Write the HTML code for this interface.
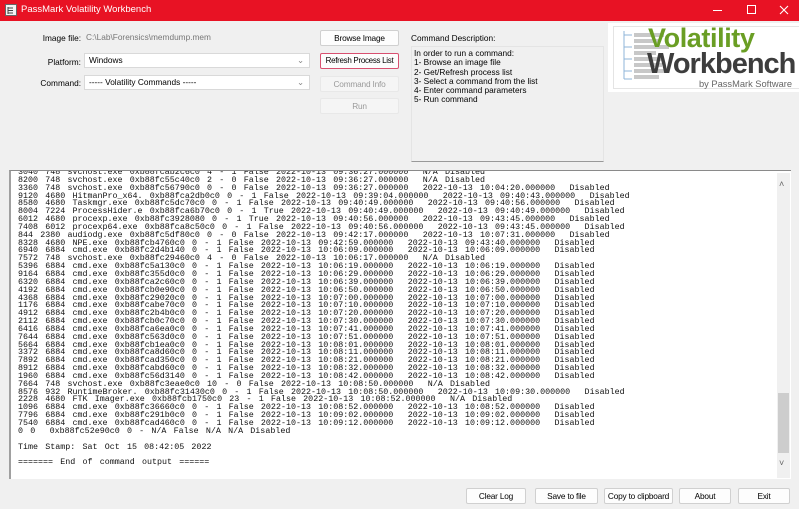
<!DOCTYPE html>
<html><head><meta charset="utf-8"><style>
*{margin:0;padding:0;box-sizing:border-box}
body{width:799px;height:509px;background:#f0f0f0;font-family:"Liberation Sans",sans-serif;font-size:8.3px;color:#000;position:relative;overflow:hidden}
.abs{position:absolute}
.title{left:0;top:0;width:799px;height:21px;background:#e81224;color:#fff}
.lbl{text-align:right;width:80px;left:0}
.combo{background:#fff;border:1px solid #d9d9d9;height:15px;padding-left:4px;line-height:13px}
.btn{background:#fdfdfd;border:1px solid #d0d0d0;border-radius:2px;text-align:center;height:16px;line-height:14px;white-space:nowrap;letter-spacing:-0.2px}
.dis{background:#f5f5f5;border-color:#e8e8e8;color:#9a9a9a}
pre{font-family:"Liberation Mono",monospace;font-size:8.35px;line-height:7.85px;white-space:pre;color:#111;word-spacing:2.2px}
</style></head><body>
<div class="abs title">
 <svg class="abs" style="left:5px;top:4px" width="12" height="12"><rect x=".5" y=".5" width="11" height="11" fill="#f3f3f3" stroke="#666"/><path d="M3 3v7M3 4h5M3 6.5h5M3 9h5" stroke="#444" fill="none"/></svg>
 <div class="abs" style="left:21px;top:4px;font-size:9.5px">PassMark Volatility Workbench</div>
 <div class="abs" style="left:713px;top:10px;width:9px;height:1px;background:#fff"></div>
 <div class="abs" style="left:747px;top:5px;width:9px;height:9px;border:1px solid #fff"></div>
 <svg class="abs" style="left:779px;top:5px" width="10" height="10"><path d="M1 1l8 8M9 1l-8 8" stroke="#fff" stroke-width="1.1"/></svg>
</div>
<div class="abs lbl" style="top:33px;width:81px">Image file:</div>
<div class="abs" style="left:86px;top:32px;color:#777">C:\Lab\Forensics\memdump.mem</div>
<div class="abs lbl" style="top:57px;width:81px">Platform:</div>
<div class="abs combo" style="left:84px;top:53px;width:226px">Windows<span class="abs" style="right:5px;top:0;color:#888">&#8964;</span></div>
<div class="abs lbl" style="top:78px;width:81px">Command:</div>
<div class="abs combo" style="left:84px;top:75px;width:226px">----- Volatility Commands -----<span class="abs" style="right:5px;top:0;color:#888">&#8964;</span></div>
<div class="abs btn" style="left:320px;top:30px;width:79px">Browse Image</div>
<div class="abs btn" style="left:320px;top:53px;width:79px;border-color:#d85070;font-size:8px;letter-spacing:-0.3px">Refresh Process List</div>
<div class="abs btn dis" style="left:320px;top:76px;width:79px">Command Info</div>
<div class="abs btn dis" style="left:320px;top:98px;width:79px">Run</div>
<div class="abs" style="left:411px;top:33px">Command Description:</div>
<div class="abs" style="left:411px;top:46px;width:193px;height:116px;border:1px solid #e4e4e4;border-bottom:1px solid #999;padding:2px 0 0 2px;line-height:9.3px">In order to run a command:<br>1- Browse an image file<br>2- Get/Refresh process list<br>3- Select a command from the list<br>4- Enter command parameters<br>5- Run command</div>
<div class="abs" style="left:608px;top:23px;width:191px;height:69px;background:#fff;overflow:hidden">
 <div class="abs" style="left:5px;top:3px;width:186px;height:63px;border:1px solid #e4e4e4;border-right:none"></div>
 <svg class="abs" style="left:11px;top:6px" width="55" height="58"><path d="M5 2v48M5 6h8M5 18h8M5 30h8M5 42h8M5 50h8" stroke="#8fb4d8" fill="none"/><g fill="#c8c8c8"><rect x="15" y="4" width="30" height="4"/><rect x="15" y="10" width="25" height="4"/><rect x="15" y="16" width="35" height="4"/><rect x="15" y="22" width="22" height="4"/><rect x="15" y="28" width="30" height="4"/><rect x="15" y="34" width="28" height="4"/><rect x="15" y="40" width="33" height="4"/><rect x="15" y="46" width="25" height="4"/></g></svg>
 <div class="abs" style="left:40px;top:0px;font-size:27px;font-weight:bold;color:#6a9e24;letter-spacing:-0.4px">Volatility</div>
 <div class="abs" style="left:39px;top:25px;font-size:29px;font-weight:bold;color:#3d3d3d;letter-spacing:-1px">Workbench</div>
 <div class="abs" style="left:91px;top:56px;font-size:9.3px;color:#666">by PassMark Software</div>
</div>
<div class="abs" style="left:9px;top:170px;width:782px;height:309px;background:#fff;border-top:1px solid #8a8a8a;border-left:2px solid #a0a0a0;overflow:hidden">
<pre class="abs" style="left:7px;top:-2px">3040 748 svchost.exe 0xb88fcab2c6c0 4 - 1 False 2022-10-13 09:36:27.000000  N/A Disabled
8200 748 svchost.exe 0xb88fc55c40c0 2 - 0 False 2022-10-13 09:36:27.000000  N/A Disabled
3360 748 svchost.exe 0xb88fc56790c0 0 - 0 False 2022-10-13 09:36:27.000000  2022-10-13 10:04:20.000000  Disabled
9120 4680 HitmanPro_x64. 0xb88fca2db0c0 0 - 1 False 2022-10-13 09:39:04.000000  2022-10-13 09:40:43.000000  Disabled
8580 4680 Taskmgr.exe 0xb88fc5dc70c0 0 - 1 False 2022-10-13 09:40:49.000000  2022-10-13 09:40:56.000000  Disabled
8004 7224 ProcessHider.e 0xb88fca6b70c0 0 - 1 True 2022-10-13 09:40:49.000000  2022-10-13 09:40:49.000000  Disabled
6012 4680 procexp.exe 0xb88fc3928080 0 - 1 True 2022-10-13 09:40:56.000000  2022-10-13 09:43:45.000000  Disabled
7408 6012 procexp64.exe 0xb88fca8c50c0 0 - 1 False 2022-10-13 09:40:56.000000  2022-10-13 09:43:45.000000  Disabled
844 2380 audiodg.exe 0xb88fc5df80c0 0 - 0 False 2022-10-13 09:42:17.000000  2022-10-13 10:07:31.000000  Disabled
8328 4680 NPE.exe 0xb88fcb4760c0 0 - 1 False 2022-10-13 09:42:59.000000  2022-10-13 09:43:40.000000  Disabled
6940 6884 cmd.exe 0xb88fc2d4b140 0 - 1 False 2022-10-13 10:06:09.000000  2022-10-13 10:06:09.000000  Disabled
7572 748 svchost.exe 0xb88fc29460c0 4 - 0 False 2022-10-13 10:06:17.000000  N/A Disabled
5396 6884 cmd.exe 0xb88fc5a130c0 0 - 1 False 2022-10-13 10:06:19.000000  2022-10-13 10:06:19.000000  Disabled
9164 6884 cmd.exe 0xb88fc355d0c0 0 - 1 False 2022-10-13 10:06:29.000000  2022-10-13 10:06:29.000000  Disabled
6320 6884 cmd.exe 0xb88fca2c60c0 0 - 1 False 2022-10-13 10:06:39.000000  2022-10-13 10:06:39.000000  Disabled
4192 6884 cmd.exe 0xb88fcb0e90c0 0 - 1 False 2022-10-13 10:06:50.000000  2022-10-13 10:06:50.000000  Disabled
4368 6884 cmd.exe 0xb88fc29020c0 0 - 1 False 2022-10-13 10:07:00.000000  2022-10-13 10:07:00.000000  Disabled
1176 6884 cmd.exe 0xb88fcabe70c0 0 - 1 False 2022-10-13 10:07:10.000000  2022-10-13 10:07:10.000000  Disabled
4912 6884 cmd.exe 0xb88fc2b4b0c0 0 - 1 False 2022-10-13 10:07:20.000000  2022-10-13 10:07:20.000000  Disabled
2112 6884 cmd.exe 0xb88fcb0c70c0 0 - 1 False 2022-10-13 10:07:30.000000  2022-10-13 10:07:30.000000  Disabled
6416 6884 cmd.exe 0xb88fca6ea0c0 0 - 1 False 2022-10-13 10:07:41.000000  2022-10-13 10:07:41.000000  Disabled
7644 6884 cmd.exe 0xb88fc563d0c0 0 - 1 False 2022-10-13 10:07:51.000000  2022-10-13 10:07:51.000000  Disabled
5664 6884 cmd.exe 0xb88fcb1ea0c0 0 - 1 False 2022-10-13 10:08:01.000000  2022-10-13 10:08:01.000000  Disabled
3372 6884 cmd.exe 0xb88fca8d60c0 0 - 1 False 2022-10-13 10:08:11.000000  2022-10-13 10:08:11.000000  Disabled
7892 6884 cmd.exe 0xb88fcad350c0 0 - 1 False 2022-10-13 10:08:21.000000  2022-10-13 10:08:21.000000  Disabled
8912 6884 cmd.exe 0xb88fcabd60c0 0 - 1 False 2022-10-13 10:08:32.000000  2022-10-13 10:08:32.000000  Disabled
1960 6884 cmd.exe 0xb88fc56d3140 0 - 1 False 2022-10-13 10:08:42.000000  2022-10-13 10:08:42.000000  Disabled
7664 748 svchost.exe 0xb88fc3eae0c0 10 - 0 False 2022-10-13 10:08:50.000000  N/A Disabled
8576 932 RuntimeBroker. 0xb88fc31430c0 0 - 1 False 2022-10-13 10:08:50.000000  2022-10-13 10:09:30.000000  Disabled
2228 4680 FTK Imager.exe 0xb88fcb1750c0 23 - 1 False 2022-10-13 10:08:52.000000  N/A Disabled
1096 6884 cmd.exe 0xb88fc36660c0 0 - 1 False 2022-10-13 10:08:52.000000  2022-10-13 10:08:52.000000  Disabled
7796 6884 cmd.exe 0xb88fc291b0c0 0 - 1 False 2022-10-13 10:09:02.000000  2022-10-13 10:09:02.000000  Disabled
7540 6884 cmd.exe 0xb88fcad460c0 0 - 1 False 2022-10-13 10:09:12.000000  2022-10-13 10:09:12.000000  Disabled
0 0  0xb88fc52e90c0 0 - N/A False N/A N/A Disabled

Time Stamp: Sat Oct 15 08:42:05 2022

======= End of command output ======</pre>
 <div class="abs" style="left:766px;top:2px;width:13px;height:305px;background:#f0f0f0"></div>
 <div class="abs" style="left:767px;top:222px;width:11px;height:60px;background:#cdcdcd"></div>
 <div class="abs" style="left:768px;top:8px;color:#666;font-size:9px">&#708;</div>
 <div class="abs" style="left:768px;top:287px;color:#666;font-size:9px">&#709;</div>
</div>
<div class="abs btn" style="left:466px;top:488px;width:60px">Clear Log</div>
<div class="abs btn" style="left:535px;top:488px;width:63px">Save to file</div>
<div class="abs btn" style="left:604px;top:488px;width:69px">Copy to clipboard</div>
<div class="abs btn" style="left:679px;top:488px;width:52px">About</div>
<div class="abs btn" style="left:738px;top:488px;width:52px">Exit</div>
</body></html>
